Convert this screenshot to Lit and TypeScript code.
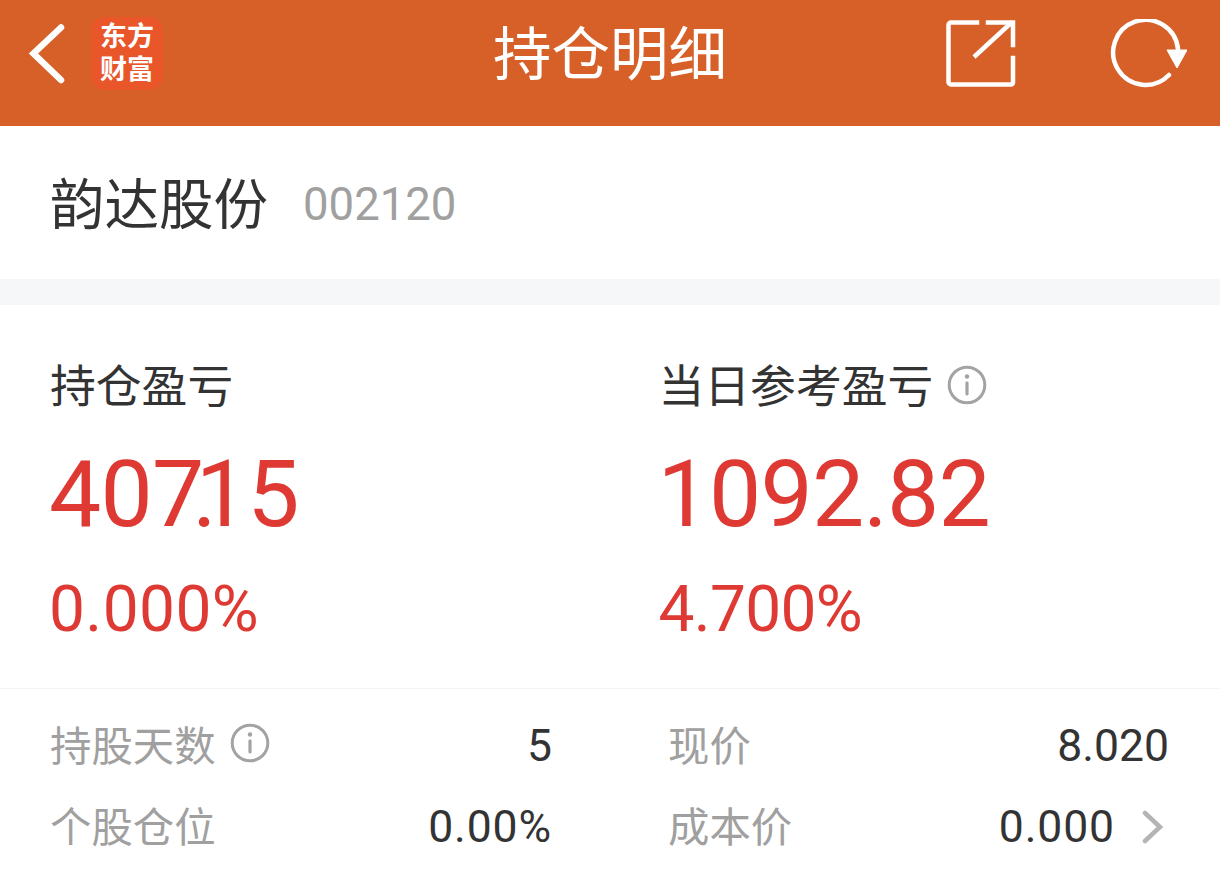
import { LitElement, html, css, svg } from "lit";
import { customElement } from "lit/decorators.js";

const info = (size: number) => html`<svg class="info" width=${size} height=${size} viewBox="0 0 40 40" fill="none">
  <circle cx="20" cy="20" r="17.8" stroke="#a3a3a3" stroke-width="3"/>
  <circle cx="20" cy="11.5" r="2.2" fill="#a3a3a3"/>
  <rect x="18.4" y="16.5" width="3.2" height="14" rx="1.4" fill="#a3a3a3"/>
</svg>`;

@customElement("app-root")
export class AppRoot extends LitElement {
  static styles = css`
    :host {
      display: block;
      width: 1220px;
      height: 886px;
      overflow: hidden;
      background: #fff;
      font-family: Roboto, "Noto Sans CJK SC", sans-serif;
      color: #333;
    }
    .cjk { font-family: "Noto Sans CJK SC", sans-serif; }
    header {
      height: 126px;
      background: #d66028;
      display: flex;
      align-items: center;
      position: relative;
      box-sizing: border-box;
      padding-bottom: 19px;
    }
    .back { margin-left: 28px; display: block; flex: none; }
    .logo {
      margin-left: 25px;
      width: 72px;
      height: 73px;
      box-sizing: border-box;
      padding-bottom: 6px;
      border-radius: 14px;
      background: #e9562a;
      color: #fff;
      font-size: 27px;
      font-weight: 700;
      line-height: 33px;
      display: flex;
      align-items: center;
      justify-content: center;
    }
    .logo span { display: block; width: 2em; }
    .title {
      position: absolute;
      left: 0;
      right: 0;
      top: 15px;
      text-align: center;
      color: #fff;
      font-size: 58.500px;
      line-height: 70px;
      font-weight: 400;
    }
    .actions { margin-left: auto; display: flex; align-items: center; gap: 94px; margin-right: 33px; }
    .actions svg { display: block; }
    .name {
      height: 153px;
      display: flex;
      align-items: center;
      padding-left: 50px;
      gap: 35px;
      box-sizing: border-box;
    }
    .name b { font-weight: 400; font-size: 54.500px; color: #333; line-height: 60px; margin-top: -4px; }
    .name span { font-size: 45.500px; color: #a0a0a0; line-height: 60px; margin-top: 4px; }
    .gap { height: 26px; background: #f6f7f9; }
    .stats {
      height: 384px;
      box-sizing: border-box;
      display: grid;
      grid-template-columns: 608.500px 1fr;
      padding-left: 50px;
      border-bottom: 1px solid #f4f4f4;
    }
    .stat { padding-top: 50px; }
    .lbl { font-size: 45.800px; line-height: 56px; color: #333; display: flex; align-items: center; gap: 14px; }
    .lbl .info { margin-top: 3px; }
    .big { font-size: 93px; line-height: 106px; color: #de3a33; margin-top: 31px; margin-left: -1px; letter-spacing: -0.8px; }
    .k7 { letter-spacing: -12px; }
    .kd { letter-spacing: -21px; }
    .pct { font-size: 64px; line-height: 74px; color: #de3a33; margin-top: 25px; margin-left: -1px; }
    .pct.wide { letter-spacing: 0.4px; }
    .pct.tight { letter-spacing: -0.7px; margin-left: 0; }
    .rows {
      display: grid;
      grid-template-columns: 502px 501px;
      column-gap: 116px;
      padding: 29px 0 0 50px;
      row-gap: 25px;
    }
    .row { display: flex; justify-content: space-between; align-items: center; height: 56px; }
    .row .k { font-size: 41.400px; color: #a0a0a0; display: flex; align-items: center; gap: 14px; line-height: 56px; margin-top: -6px; }
    .row .v { font-size: 44.500px; color: #333; line-height: 56px; display: flex; align-items: center; }
    .row .v.wide { letter-spacing: 0.9px; }
    .chev { margin-left: 27px; margin-right: 6px; display: block; }
  `;

  render() {
    return html`
      <header>
        <svg class="back" width="38" height="64" viewBox="0 0 38 64" fill="none">
          <path d="M33 5.500 L5.500 31.500 L33 58" stroke="#fff" stroke-width="6.500" stroke-linecap="round" stroke-linejoin="miter"/>
        </svg>
        <div class="logo cjk"><span>东方财富</span></div>
        <div class="title cjk">持仓明细</div>
        <div class="actions">
          <svg width="70" height="70" viewBox="0 0 70 70" fill="none">
            <path d="M31 3.500 H5 A2.500 2.500 0 0 0 2.500 6 V63 A2.500 2.500 0 0 0 5 65.500 H65 A2 2 0 0 0 67 63.500 V39" stroke="#fff" stroke-width="4.500" stroke-linecap="square"/>
            <path d="M28 38 L66 3" stroke="#fff" stroke-width="4.500"/>
            <path d="M42 3.500 H67 V26" stroke="#fff" stroke-width="4.500" stroke-linecap="square"/>
          </svg>
          <svg width="77" height="70" viewBox="0 0 77 70" fill="none">
            <path d="M59 56 A32.500 32.500 0 1 1 68 30" stroke="#fff" stroke-width="4.500" stroke-linecap="round"/>
            ${svg`<path d="M57 31 H77 L67 49 Z" fill="#fff" stroke="#fff" stroke-width="1"/>`}
          </svg>
        </div>
      </header>
      <div class="name">
        <b class="cjk">韵达股份</b><span>002120</span>
      </div>
      <div class="gap"></div>
      <div class="stats">
        <div class="stat">
          <div class="lbl cjk">持仓盈亏</div>
          <div class="big">40<span class="k7">7</span><span class="kd">.</span>15</div>
          <div class="pct wide">0.000%</div>
        </div>
        <div class="stat">
          <div class="lbl cjk">当日参考盈亏 ${info(40)}</div>
          <div class="big">1092.82</div>
          <div class="pct tight">4.700%</div>
        </div>
      </div>
      <div class="rows">
        <div class="row">
          <div class="k cjk">持股天数 ${info(40)}</div>
          <div class="v">5</div>
        </div>
        <div class="row">
          <div class="k cjk">现价</div>
          <div class="v">8.020</div>
        </div>
        <div class="row">
          <div class="k cjk">个股仓位</div>
          <div class="v wide">0.00%</div>
        </div>
        <div class="row">
          <div class="k cjk">成本价</div>
          <div class="v wide">0.000
            <svg class="chev" width="21" height="34" viewBox="0 0 21 34" fill="none">
              <path d="M3 3 L18 17 L3 31" stroke="#b4b4b4" stroke-width="4.500" stroke-linecap="round"/>
            </svg>
          </div>
        </div>
      </div>
    `;
  }
}
